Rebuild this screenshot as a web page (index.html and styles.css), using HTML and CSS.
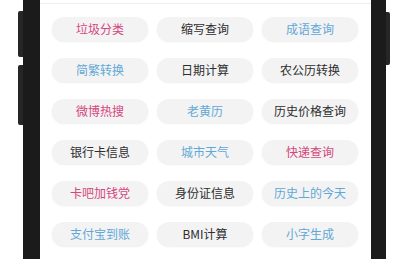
FILE: index.html
```html
<!DOCTYPE html>
<html lang="zh">
<head>
<meta charset="utf-8">
<title>工具</title>
<link rel="stylesheet" href="styles.css">
</head>
<body>
<div class="gutter gutter-left">
  <div class="key key-l1"></div>
  <div class="key key-l2"></div>
</div>
<div class="frame"></div>
<main class="screen">
  <div class="panel">
    <div class="tool pink">垃圾分类</div>
    <div class="tool dark">缩写查询</div>
    <div class="tool blue">成语查询</div>
    <div class="tool blue">简繁转换</div>
    <div class="tool dark">日期计算</div>
    <div class="tool dark">农公历转换</div>
    <div class="tool pink">微博热搜</div>
    <div class="tool blue">老黄历</div>
    <div class="tool dark">历史价格查询</div>
    <div class="tool dark">银行卡信息</div>
    <div class="tool blue">城市天气</div>
    <div class="tool pink">快递查询</div>
    <div class="tool pink">卡吧加钱党</div>
    <div class="tool dark">身份证信息</div>
    <div class="tool blue">历史上的今天</div>
    <div class="tool blue">支付宝到账</div>
    <div class="tool dark">BMI计算</div>
    <div class="tool blue">小字生成</div>
  </div>
</main>
<div class="frame frame-right"></div>
<div class="gutter gutter-right">
  <div class="key key-r1"></div>
</div>
</body>
</html>
```

FILE: styles.css
```css
html, body {
  margin: 0;
  padding: 0;
  background: #ffffff;
}
body {
  display: flex;
  width: 398px;
  height: 259px;
  overflow: hidden;
  font-family: "Noto Sans CJK SC", "Noto Sans", sans-serif;
}
.gutter {
  display: flex;
  flex-direction: column;
}
.gutter-left {
  width: 23px;
  align-items: flex-end;
  padding-top: 11px;
  box-sizing: border-box;
}
.gutter-right {
  width: 12px;
  align-items: flex-start;
  padding-top: 12px;
  box-sizing: border-box;
}
.key {
  background: #262626;
  width: 5px;
}
.key-l1 {
  height: 46px;
  border-radius: 2px 0 0 2px;
}
.key-l2 {
  height: 60px;
  margin-top: 8px;
  border-radius: 2px 0 0 2px;
}
.key-r1 {
  width: 4px;
  height: 53px;
  border-radius: 0 2px 2px 0;
}
.frame {
  width: 17px;
  background: #1b1b1b;
}
.frame-right {
  width: 15px;
}
.screen {
  width: 331px;
  padding-top: 3px;
  background: #ffffff;
}
.panel {
  border-top: 1px solid #efefef;
  padding: 13px 13px 0 12px;
  display: grid;
  grid-template-columns: repeat(3, 1fr);
  column-gap: 9px;
  row-gap: 17px;
}
.tool {
  height: 24px;
  border-radius: 12px;
  background: #f3f3f4;
  box-shadow: 0 1px 2px rgba(0, 0, 0, 0.07);
  display: flex;
  align-items: center;
  justify-content: center;
  font-size: 12px;
  line-height: 1;
}
.pink { color: #d4477c; }
.blue { color: #62a8d6; }
.dark { color: #2e2e2e; }
```
